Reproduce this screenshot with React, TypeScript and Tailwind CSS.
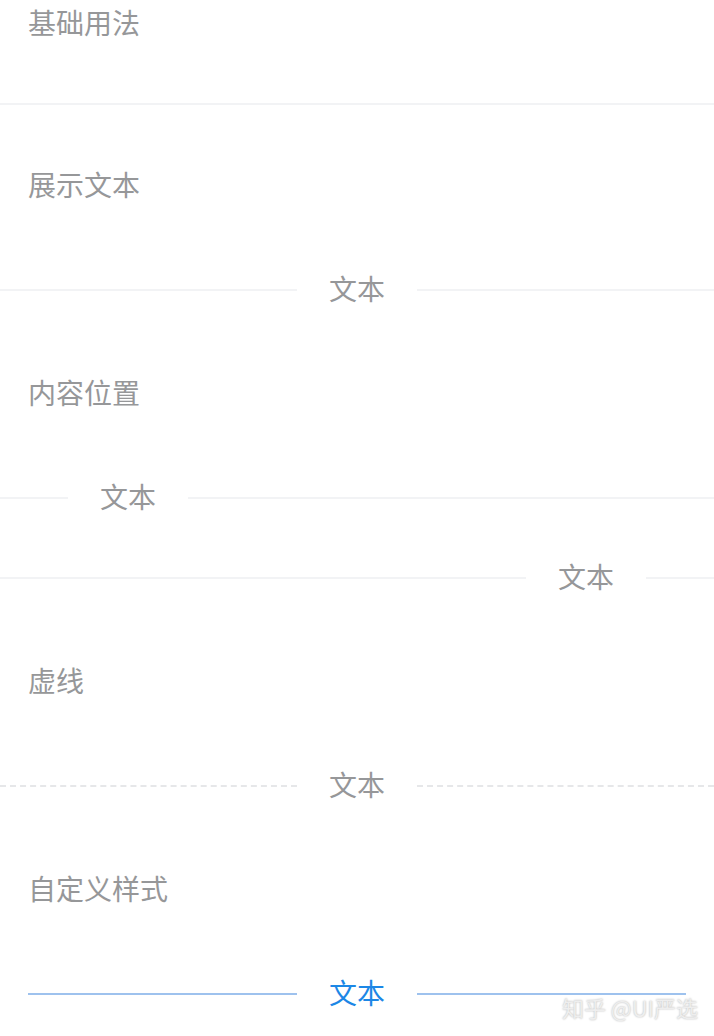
import React from 'react';

const font = { fontFamily: '"Noto Sans CJK SC", "Noto Sans", sans-serif' };

function Title({ children, className = '' }: { children: React.ReactNode; className?: string }) {
  return (
    <div className={`flex h-[48px] items-center px-[28px] pb-[4px] text-[28px] leading-none text-[#969799] ${className}`}>
      {children}
    </div>
  );
}

type DividerProps = {
  position?: 'center' | 'left' | 'right';
  dashed?: boolean;
  custom?: boolean;
  className?: string;
};

function Divider({ position = 'center', dashed = false, custom = false, className = '' }: DividerProps) {
  const line = dashed
    ? 'border-t-2 border-dashed border-[#e6e7e9]'
    : custom
      ? 'h-[2px] bg-[#9ec2ee]'
      : 'h-[2px] bg-[#f2f3f5]';
  const left = position === 'left' ? 'w-[68px] flex-none' : 'flex-1';
  const right = position === 'right' ? 'w-[68px] flex-none' : 'flex-1';
  return (
    <div className={`flex h-[48px] items-center ${custom ? 'px-[28px]' : ''} ${className}`}>
      <div className={`${line} ${left}`} />
      <span className={`mx-[32px] mb-[4px] text-[28px] leading-none ${custom ? 'text-[#1c87e6]' : 'text-[#969799]'}`}>文本</span>
      <div className={`${line} ${right}`} />
    </div>
  );
}

export default function App() {
  return (
    <div className="relative h-[1036px] w-[714px] overflow-hidden bg-white" style={font}>
      <Title>基础用法</Title>
      <div className="mt-[55px] h-[2px] bg-[#f2f3f5]" />
      <Title className="mt-[57px]">展示文本</Title>
      <Divider className="mt-[56px]" />
      <Title className="mt-[56px]">内容位置</Title>
      <Divider position="left" className="mt-[56px]" />
      <Divider position="right" className="mt-[32px]" />
      <Title className="mt-[56px]">虚线</Title>
      <Divider dashed className="mt-[56px]" />
      <Title className="mt-[56px]">自定义样式</Title>
      <Divider custom className="mt-[56px]" />
      <div className="absolute bottom-[18px] right-[16px] text-[22px] leading-none text-[#eeeeee] [text-shadow:0_0_2px_#b0b0b0]">
        知乎 @UI严选
      </div>
    </div>
  );
}
